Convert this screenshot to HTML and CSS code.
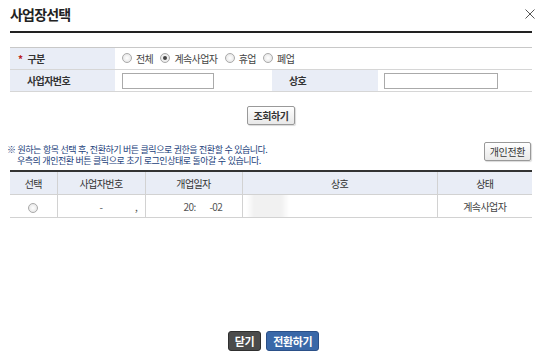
FILE: index.html
```html
<!DOCTYPE html>
<html lang="ko">
<head>
  <meta charset="UTF-8">
  <title>사업장선택</title>
  <link rel="stylesheet" href="styles.css">
</head>
<body>
  <div class="popup">
    <div class="popup-head">
      <h1>사업장선택</h1>
      <button class="btn-close" title="닫기">
        <svg width="10" height="10" viewBox="0 0 10 10"><path d="M0.5 0.5L9.5 9.5M9.5 0.5L0.5 9.5" stroke="#555" stroke-width="1" fill="none"/></svg>
      </button>
    </div>

    <!-- 검색 조건 -->
    <table class="search">
      <colgroup>
        <col style="width:105px">
        <col style="width:157px">
        <col style="width:106px">
        <col>
      </colgroup>
      <tr>
        <th class="label req"><span class="star">*</span>구분</th>
        <td colspan="3">
          <label class="radio"><span class="dot"></span>전체</label>
          <label class="radio"><span class="dot on"></span>계속사업자</label>
          <label class="radio"><span class="dot"></span>휴업</label>
          <label class="radio"><span class="dot"></span>폐업</label>
        </td>
      </tr>
      <tr>
        <th class="label"><span class="lbl">사업자번호</span></th>
        <td><input type="text" class="inp inp-no"></td>
        <th class="label"><span class="lbl">상호</span></th>
        <td class="last"><input type="text" class="inp inp-name"></td>
      </tr>
    </table>

    <div class="search-btn">
      <button class="btn-gray">조회하기</button>
    </div>

    <div class="notice-row">
      <p class="notice">※ 원하는 항목 선택 후, 전환하기 버튼 클릭으로 권한을 전환할 수 있습니다.<br>
        <span class="indent">우측의 개인전환 버튼 클릭으로 초기 로그인상태로 돌아갈 수 있습니다.</span></p>
      <button class="btn-gray">개인전환</button>
    </div>

    <!-- 결과 목록 -->
    <table class="list">
      <colgroup>
        <col style="width:47px">
        <col style="width:88px">
        <col style="width:97px">
        <col style="width:195px">
        <col>
      </colgroup>
      <thead>
        <tr>
          <th>선택</th>
          <th>사업자번호</th>
          <th>개업일자</th>
          <th>상호</th>
          <th>상태</th>
        </tr>
      </thead>
      <tbody>
        <tr>
          <td><span class="dot"></span></td>
          <td class="mask mask-no">-&emsp;&emsp;&emsp;&ensp;,</td>
          <td class="mask mask-date">20:&emsp;&ensp;-02</td>
          <td class="blur">&nbsp;</td>
          <td>계속사업자</td>
        </tr>
      </tbody>
    </table>

    <div class="bottom-btns">
      <button class="btn-dark">닫기</button>
      <button class="btn-blue">전환하기</button>
    </div>
  </div>
</body>
</html>
```

FILE: styles.css
```css
body {
  margin: 0;
  background-color: #fff;
  color: #333;
  font-family: "Noto Sans CJK KR", "DejaVu Sans", sans-serif;
  font-size: 10px;
  letter-spacing: -0.6px;
}

.popup {
  width: 522px;
  height: 360px;
  padding: 0 7px 0 10px;
  display: flex;
  flex-direction: column;
}

.popup-head {
  display: flex;
  justify-content: space-between;
  align-items: flex-start;
  height: 31px;
  border-bottom: 2px solid #222;
}

.popup-head h1 {
  margin: 4px 0 0 0;
  font-size: 14px;
  font-weight: bold;
  color: #222;
  line-height: 20px;
  letter-spacing: -0.8px;
}

.btn-close {
  margin: 7px -4px 0 0;
  padding: 0;
  border: none;
  background: none;
  width: 12px;
  height: 12px;
}

table {
  width: 100%;
  border-collapse: collapse;
  table-layout: fixed;
}

.search {
  margin-top: 14px;
  border-top: 1px solid #c8c8c8;
}

.search th, .search td {
  height: 21px;
  padding: 0 0 0 7px;
  border-bottom: 1px solid #d6d6d6;
}

.search th.label {
  background-color: #e9edf6;
  text-align: left;
  padding-left: 8px;
  font-weight: bold;
  color: #333;
}

.lbl {
  margin-left: 9px;
}

.star {
  color: #b22;
  margin-right: 5px;
}

.search td.last {
  padding-left: 6px;
}

.radio {
  display: inline-flex;
  align-items: center;
  margin-right: 5px;
  color: #444;
}

.dot {
  display: inline-block;
  width: 8px;
  height: 8px;
  border: 1px solid #aaa;
  border-radius: 50%;
  background: radial-gradient(circle, #fff 0, #e0e0e0 100%);
  margin-right: 4px;
  position: relative;
}

.dot.on::after {
  content: "";
  position: absolute;
  left: 2px;
  top: 2px;
  width: 4px;
  height: 4px;
  border-radius: 50%;
  background-color: #444;
}

.inp {
  box-sizing: border-box;
  height: 16px;
  border: 1px solid #aaa;
  margin: 0;
  display: block;
}

.inp-no {
  width: 92px;
}

.inp-name {
  width: 114px;
}

.search-btn {
  display: flex;
  justify-content: center;
  margin-top: 14px;
}

.btn-gray {
  height: 19px;
  padding: 0 5px;
  border: 1px solid #999;
  border-radius: 2px;
  background: linear-gradient(#fff, #e8e8e8);
  font-family: inherit;
  font-size: 10px;
  letter-spacing: -0.4px;
  font-weight: bold;
  color: #333;
  box-shadow: 1px 1px 1px rgba(0,0,0,0.15);
}

.notice-row {
  display: flex;
  justify-content: space-between;
  align-items: flex-start;
  margin-top: 17px;
}

.notice {
  margin: 2px 0 0 -3px;
  font-size: 9px;
  line-height: 11px;
  color: #22407a;
  letter-spacing: -0.5px;
}

.indent {
  padding-left: 10px;
}

.notice-row .btn-gray {
  margin-right: 1px;
  font-weight: normal;
}

.list {
  margin-top: 4px;
  border-top: 2px solid #333;
}

.list th, .list td {
  height: 22px;
  padding: 0;
  border: 1px solid #d2d2d2;
  text-align: center;
  color: #444;
}

.list th:first-child, .list td:first-child {
  border-left: none;
}

.list th:last-child, .list td:last-child {
  border-right: none;
}

.list th {
  background-color: #e9edf6;
  font-weight: normal;
  color: #333;
}

.list td .dot {
  margin: 0;
  vertical-align: middle;
}

.list td.mask {
  text-align: left;
  color: #555;
  white-space: nowrap;
}

.list td.mask-no {
  padding-left: 42px;
}

.list td.mask-date {
  padding-left: 38px;
}

.blur {
  background: linear-gradient(90deg, #fff 2%, #f1f1f1 6%, #f1f1f1 20%, #fff 24%);
}

.bottom-btns {
  margin-top: auto;
  margin-bottom: 9px;
  display: flex;
  justify-content: center;
  gap: 5px;
  padding-left: 5px;
}

.bottom-btns button {
  height: 20px;
  border-radius: 3px;
  font-family: inherit;
  font-size: 11px;
  letter-spacing: -0.4px;
  font-weight: bold;
  color: #fff;
  padding: 0 6px;
}

.btn-dark {
  background-color: #4b4b4b;
  border: 1px solid #2f2f2f;
}

.btn-blue {
  background-color: #3a68a8;
  border: 1px solid #2b5088;
}
```
